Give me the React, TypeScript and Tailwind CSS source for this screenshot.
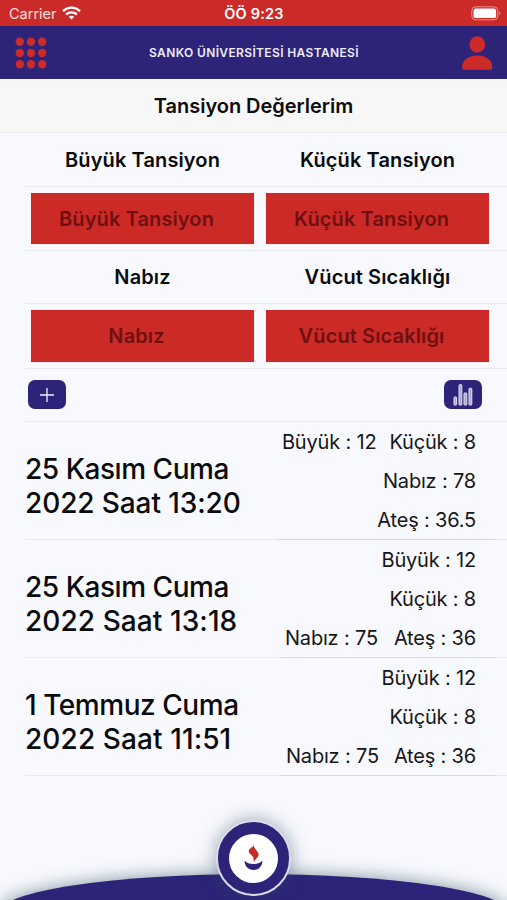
import React from 'react';
import clsx from 'clsx';

interface Reading {
  date: string;
  time: string;
  lines: string[][];
  rule: string;
  tracking: string;
  gap: string;
}

const readings: Reading[] = [
  {
    date: '25 Kasım Cuma',
    time: '2022 Saat 13:20',
    lines: [['Büyük : 12', 'Küçük : 8'], ['Nabız : 78'], ['Ateş : 36.5']],
    rule: 'ml-[276px]',
    tracking: 'tracking-[-0.1px]',
    gap: 'gap-[13px]',
  },
  {
    date: '25 Kasım Cuma',
    time: '2022 Saat 13:18',
    lines: [['Büyük : 12'], ['Küçük : 8'], ['Nabız : 75', 'Ateş : 36']],
    rule: 'ml-[280px]',
    tracking: 'tracking-[0.08px]',
    gap: 'gap-[16px]',
  },
  {
    date: '1 Temmuz Cuma',
    time: '2022 Saat 11:51',
    lines: [['Büyük : 12'], ['Küçük : 8'], ['Nabız : 75', 'Ateş : 36']],
    rule: 'ml-[280px]',
    tracking: 'tracking-[0.1px]',
    gap: 'gap-[15px]',
  },
];

function StatusBar() {
  return (
    <div className="grid h-[26px] grid-cols-3 items-center bg-[#cb2b28] pt-[2px] text-[14.5px] text-white">
      <div className="flex items-center gap-[6px] pl-[9px] text-white/85">
        <span>Carrier</span>
        <svg width="19" height="14" viewBox="0 0 19 14" fill="none" stroke="white" strokeWidth="2.4" className="-mt-[3px] -ml-px">
          <path d="M1 5.2C6 0.4 13 0.4 18 5.2" />
          <path d="M4.1 8.5C7.2 5.6 11.8 5.6 14.9 8.5" />
          <path d="M9.5 13.6L6.8 10.8C8.3 9.4 10.7 9.4 12.2 10.8Z" fill="white" stroke="none" />
        </svg>
      </div>
      <div className="pl-px text-center font-semibold tracking-[0.2px]">ÖÖ 9:23</div>
      <div className="flex justify-end pr-[6px]">
        <svg width="30" height="15" viewBox="0 0 30 15" className="-mt-[2px]">
          <rect x="0.8" y="0.8" width="26" height="13" rx="3.8" fill="none" stroke="#e9918f" strokeWidth="1" />
          <rect x="2.5" y="2.5" width="22.6" height="9.6" rx="2.2" fill="white" />
          <path d="M28.2 5.2Q30.4 7.3 28.2 9.4Z" fill="#e9918f" />
        </svg>
      </div>
    </div>
  );
}

function Header() {
  const dots = [4.8, 16, 27.2];
  return (
    <header className="flex h-[53px] items-center justify-between bg-[#2d2379] pl-[15px] pr-[14px]">
      <svg width="32" height="32" viewBox="0 0 32 32" fill="#cd2b2a">
        {dots.map((y) => dots.map((x) => <circle key={`${x}-${y}`} cx={x} cy={y} r="4.2" />))}
      </svg>
      <h1 className="text-[12px] font-semibold tracking-[0.36px] text-[#eeedf8]">
        SANKO ÜNİVERSİTESİ HASTANESİ
      </h1>
      <svg width="32" height="34" viewBox="0 0 32 34" fill="#cd2b2a">
        <ellipse cx="16.3" cy="8.5" rx="7.9" ry="8.3" />
        <path d="M1 31.5C1 24 8 19.6 16.3 19.6S31.3 24 31.3 31.5Q31.3 33.8 29.3 33.8H3Q1 33.8 1 31.5Z" />
      </svg>
    </header>
  );
}

function FieldRow({ names }: { names: [string, string] }) {
  return (
    <>
      <div className="ml-[25px] grid h-[53.5px] grid-cols-[235px_235px] items-center border-b border-[#e9eaf1] pt-[0.9px] text-center text-[20px] font-semibold tracking-[0.12px]">
        {names.map((name) => (
          <label key={name}>{name}</label>
        ))}
      </div>
      <div className="ml-[25px] flex h-[64.25px] items-center gap-[12.5px] border-b border-[#e9eaf1] pt-[0.5px] pl-[6.25px]">
        {names.map((name) => (
          <div
            key={name}
            className="flex h-[51.5px] w-[222.5px] items-center justify-center bg-[#cb2a27] pt-[0.5px] pr-[12px] text-[20px] font-semibold tracking-[0.12px] text-[#6f1010] outline outline-[#fff1f1]"
          >
            {name}
          </div>
        ))}
      </div>
    </>
  );
}

function Toolbar() {
  return (
    <div className="ml-[25px] flex h-[53.5px] items-center justify-between border-b border-[#e9eaf1] pl-[3px] pr-[25px]">
      <button type="button" className="flex h-[29px] w-[38px] items-center justify-center rounded-[7px] bg-[#2d2379]">
        <svg width="14" height="14" viewBox="0 0 14 14" stroke="#f0effa" strokeWidth="1.3">
          <path d="M7 0V14M0 7H14" />
        </svg>
      </button>
      <button type="button" className="flex h-[29px] w-[38px] items-center justify-center rounded-[7px] bg-[#2d2379]">
        <svg width="20" height="22" viewBox="0 0 20 22" fill="#aaa5cf" stroke="#e5e3f5" strokeWidth="1">
          <rect x="1" y="13" width="2.6" height="8" rx="0.6" />
          <rect x="6" y="0.7" width="2.8" height="20.3" rx="0.6" />
          <rect x="11" y="9" width="2.8" height="12" rx="0.6" />
          <rect x="16" y="4.3" width="2.8" height="16.7" rx="0.6" />
        </svg>
      </button>
    </div>
  );
}

function ReadingRow({ reading }: { reading: Reading }) {
  return (
    <div className="h-[118px]">
      <div className="ml-[25px] flex h-[118px] items-center justify-between border-b border-[#e9eaf1] pr-[31px]">
        <div className="pt-[10px] text-[28px] leading-[34px] font-medium">
          <div className="tracking-[-0.45px]">{reading.date}</div>
          <div className={reading.tracking}>{reading.time}</div>
        </div>
        <div className="pt-[2px] text-right text-[20px] leading-[39.2px] tracking-[-0.18px] text-[#161618]">
          {reading.lines.map((line) => (
            <div key={line[0]} className={clsx('flex justify-end', reading.gap)}>
              {line.map((value) => (
                <span key={value}>{value}</span>
              ))}
            </div>
          ))}
        </div>
      </div>
      <div className={clsx('-mt-px mr-[12px] h-px bg-[#d9dae1]', reading.rule)} />
    </div>
  );
}

function BottomBar() {
  return (
    <div className="relative mt-auto h-[84px] w-full">
      <div className="absolute top-[57.5px] left-0 h-[76px] w-full rounded-[50%] bg-[#2d2379] shadow-[0_0_18px_rgba(40,75,90,0.6)]" />
      <button
        type="button"
        className="absolute top-[4px] left-[216.4px] flex h-[76px] w-[75px] items-center justify-center rounded-full border-2 border-[#dcdcec] bg-[#2d2379] shadow-[0_0_18px_rgba(40,75,90,0.5)]"
      >
        <span className="flex size-[49px] items-center justify-center rounded-full bg-white">
          <svg width="19" height="26" viewBox="0 0 19 26">
            <path
              d="M10 0C9 3.2 14.6 6.2 14.6 9.6C14.6 12.4 11.2 13.8 10 17C9.2 14.6 9.9 12.8 8.6 11.2C7 9.6 4.6 8.6 4.8 6C5 3.4 8.4 2.6 10 0Z"
              fill="#c8282a"
            />
            <path d="M0.5 15.5C4 20.3 15 20.3 18.5 15.5C18.3 21.5 14.5 25 9.5 25S0.7 21.5 0.5 15.5Z" fill="#2d2379" />
          </svg>
        </span>
      </button>
    </div>
  );
}

export default function App() {
  return (
    <div className="flex h-[900px] w-[507px] flex-col overflow-hidden bg-[#f8f9fe] font-['Inter',sans-serif] text-[#0b0b0d]">
      <StatusBar />
      <Header />
      <div className="flex h-[54px] items-center justify-center border-b border-[#ebecf0] bg-[#f7f7f7] text-[20px] font-semibold tracking-[-0.03px]">
        Tansiyon Değerlerim
      </div>
      <FieldRow names={['Büyük Tansiyon', 'Küçük Tansiyon']} />
      <FieldRow names={['Nabız', 'Vücut Sıcaklığı']} />
      <Toolbar />
      {readings.map((reading) => (
        <ReadingRow key={reading.time} reading={reading} />
      ))}
      <BottomBar />
    </div>
  );
}
